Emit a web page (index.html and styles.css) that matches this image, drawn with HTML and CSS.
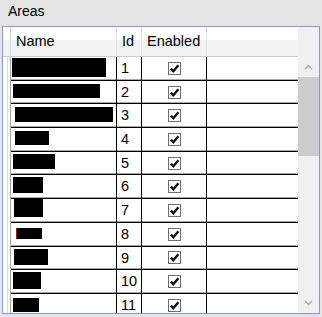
FILE: index.html
```html
<!DOCTYPE html>
<html lang="en">
<head>
  <meta charset="UTF-8">
  <title>Areas</title>
  <link rel="stylesheet" href="styles.css">
</head>
<body>
  <div class="title">Areas</div>

  <div class="group">
    <div class="table">
      <div class="head">
        <div class="hcell corner"></div>
        <div class="hcell">Name</div>
        <div class="hcell">Id</div>
        <div class="hcell">Enabled</div>
        <div class="hcell fill"></div>
      </div>

      <div class="rows" id="rows"></div>
    </div>

    <div class="scroll">
      <div class="scroll-top"></div>
      <div class="arrow">
        <svg width="9" height="6" viewBox="0 0 9 6"><path d="M1 5 L4.5 1.5 L8 5" fill="none" stroke="#a6a6a6" stroke-width="1.3"/></svg>
      </div>
      <div class="thumb"></div>
      <div class="track"></div>
      <div class="arrow">
        <svg width="9" height="6" viewBox="0 0 9 6"><path d="M1 1 L4.5 4.5 L8 1" fill="none" stroke="#a6a6a6" stroke-width="1.3"/></svg>
      </div>
    </div>
  </div>

  <script>
    // redacted name bars: [left, top, width, height]
    const areas = [
      [1, 1, 94, 19],
      [2, 3, 87, 14],
      [4, 3, 98, 15],
      [4, 3, 34, 14],
      [2, 2, 42, 15],
      [2, 2, 30, 16],
      [3, 0, 29, 18],
      [5, 5, 26, 11],
      [3, 2, 34, 16],
      [2, 2, 28, 17],
      [2, 4, 26, 14]
    ];

    const check = '<svg width="11" height="11" viewBox="0 0 11 11"><path d="M1.8 5.6 L4.3 8.3 L9.4 2.2" fill="none" stroke="#111" stroke-width="2.4"/></svg>';

    document.getElementById('rows').innerHTML = areas.map((b, i) => `
      <div class="row">
        <div class="rowhead"></div>
        <div class="cell name">
          <span class="bar${i === 7 ? ' marked' : ''}" style="margin:${b[1]}px 0 0 ${b[0]}px;width:${b[2]}px;height:${b[3]}px"></span>
        </div>
        <div class="cell id">${i + 1}</div>
        <div class="cell enabled"><span class="chk">${check}</span></div>
        <div class="cell fill"></div>
      </div>
    `).join('');
  </script>
</body>
</html>
```

FILE: styles.css
```css
* {
  box-sizing: border-box;
}

body {
  margin: 0;
  width: 322px;
  height: 317px;
  overflow: hidden;
  background: #e4e4e4;
  font-family: "Liberation Sans", Arial, sans-serif;
  font-size: 14.5px;
  color: #000;
}

.title {
  height: 26px;
  padding: 2px 0 0 8px;
  font-size: 14px;
  line-height: 18px;
}

.group {
  margin-left: 2px;
  width: 318px;
  height: 288px;
  border: 1px solid #829ec8;
  background: #fff;
  display: flex;
}

.table {
  flex: 1;
  display: flex;
  flex-direction: column;
  overflow: hidden;
}

.head,
.rows {
  display: grid;
  grid-template-columns: 8px 106px 25px 65px 1fr;
}

.head {
  height: 30px;
  border-bottom: 1px solid #c9ccd2;
  background: linear-gradient(#fff 0 46%, #f1f2f5 46%);
}

.hcell {
  padding-left: 5px;
  line-height: 29px;
  border-right: 1px solid #dfe1e6;
}

.hcell.corner {
  padding: 0;
  border-right-color: #cfd2d8;
}

.hcell.fill {
  border-right: none;
}

.rows {
  grid-auto-rows: 23.7px;
  overflow: hidden;
}

.row {
  display: contents;
}

.rowhead {
  background: linear-gradient(to right, #fff 4px, #dadada 4px 5px, #fff 5px);
  border-right: 1px solid #a9a9a9;
}

.cell {
  border-bottom: 1px solid #000;
  border-right: 1px solid #000;
  box-shadow: inset 0 -1px 0 #a8a8a8;
}

.cell.fill {
  border-right: none;
}

.bar {
  display: block;
  background: #000;
}

.bar.marked {
  border-left: 1px solid #8a2a10;
}

.cell.id {
  padding-left: 4px;
  line-height: 22px;
}

.cell.enabled {
  display: flex;
  align-items: center;
  justify-content: center;
}

.chk {
  width: 13px;
  height: 13px;
  border: 1px solid #6f6f6f;
  background: #fff;
  display: flex;
  align-items: center;
  justify-content: center;
}

.scroll {
  width: 21px;
  background: #f0f0f0;
  display: flex;
  flex-direction: column;
}

.scroll-top {
  height: 30px;
}

.arrow {
  height: 20px;
  display: flex;
  align-items: center;
  justify-content: center;
}

.thumb {
  height: 79px;
  background: #cdcdcd;
}

.track {
  flex: 1;
}
```
